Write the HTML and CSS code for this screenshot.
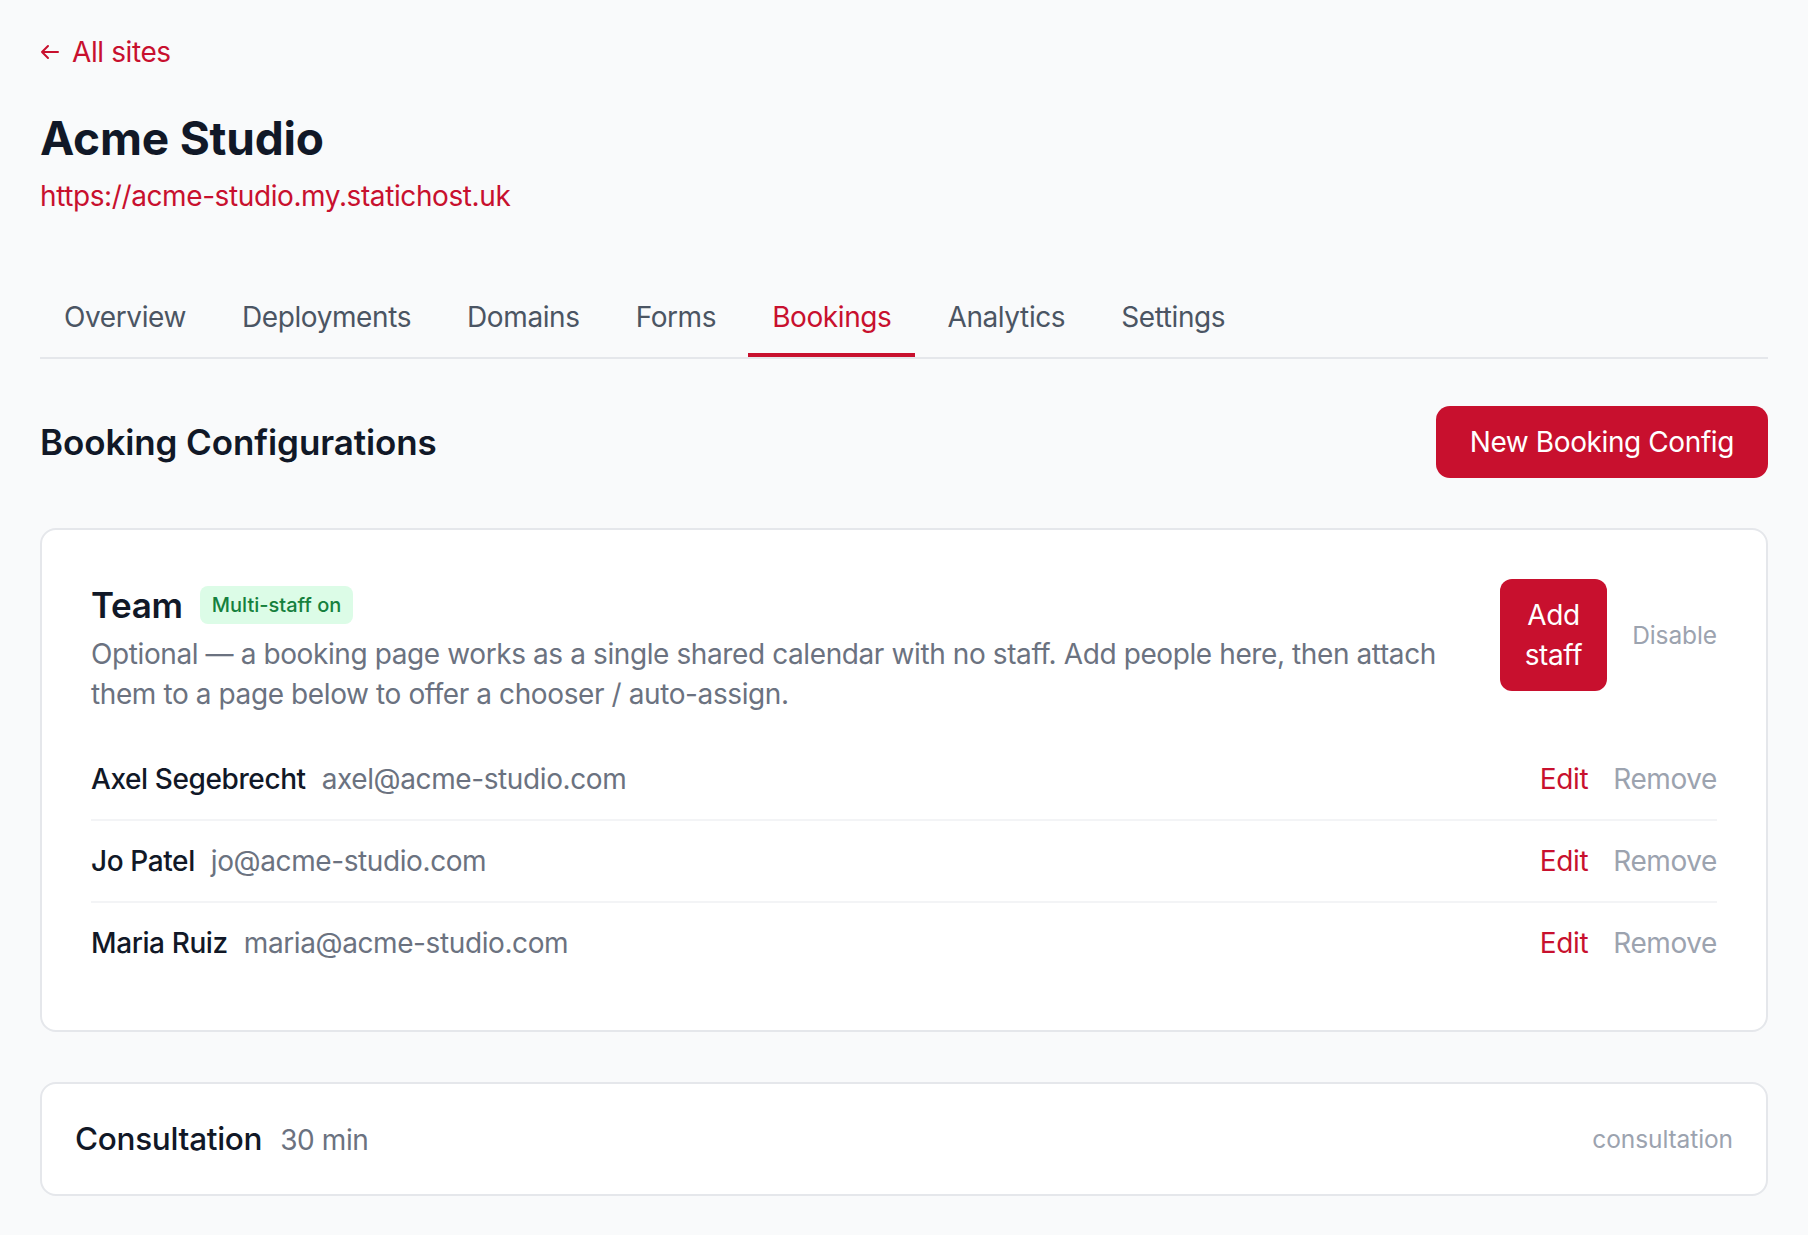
FILE: index.html
```html
<!DOCTYPE html>
<html lang="en">
<head>
    <meta charset="UTF-8">
    <meta name="viewport" content="width=device-width, initial-scale=1.0">
    <title>Bookings - Acme Studio</title>
    <link rel="stylesheet" href="styles.css">
</head>
<body>
<main class="page">
    <a class="back-link" href="#">
        <svg width="20" height="16" viewBox="0 0 20 16" fill="none" stroke="currentColor" stroke-width="2" stroke-linecap="round" stroke-linejoin="round"><path d="M18 8H2M8 2L2 8l6 6"/></svg>
        All sites
    </a>

    <h1 class="site-title">Acme Studio</h1>
    <a class="site-url" href="#">https://acme-studio.my.statichost.uk</a>

    <nav class="tabs">
        <a class="tab" href="#">Overview</a>
        <a class="tab" href="#">Deployments</a>
        <a class="tab" href="#">Domains</a>
        <a class="tab" href="#">Forms</a>
        <a class="tab active" href="#">Bookings</a>
        <a class="tab" href="#">Analytics</a>
        <a class="tab" href="#">Settings</a>
    </nav>

    <div class="section-head">
        <h2>Booking Configurations</h2>
        <button class="btn" type="button">New Booking Config</button>
    </div>

    <!-- Team -->
    <section class="card team-card">
        <div class="team-head">
            <div class="team-info">
                <div class="team-title">
                    <h3>Team</h3>
                    <span class="badge">Multi-staff on</span>
                </div>
                <p class="team-desc">Optional — a booking page works as a single shared calendar with no staff. Add people here, then attach them to a page below to offer a chooser / auto-assign.</p>
            </div>
            <div class="team-actions">
                <button class="btn btn-narrow" type="button">Add staff</button>
                <a class="small-muted" href="#">Disable</a>
            </div>
        </div>

        <ul class="staff-list">
            <li class="staff-row">
                <div class="staff-who">
                    <span class="staff-name">Axel Segebrecht</span>
                    <span class="staff-email">axel@acme-studio.com</span>
                </div>
                <div class="staff-actions">
                    <a class="link-red" href="#">Edit</a>
                    <a class="link-muted" href="#">Remove</a>
                </div>
            </li>
            <li class="staff-row">
                <div class="staff-who">
                    <span class="staff-name">Jo Patel</span>
                    <span class="staff-email">jo@acme-studio.com</span>
                </div>
                <div class="staff-actions">
                    <a class="link-red" href="#">Edit</a>
                    <a class="link-muted" href="#">Remove</a>
                </div>
            </li>
            <li class="staff-row">
                <div class="staff-who">
                    <span class="staff-name">Maria Ruiz</span>
                    <span class="staff-email">maria@acme-studio.com</span>
                </div>
                <div class="staff-actions">
                    <a class="link-red" href="#">Edit</a>
                    <a class="link-muted" href="#">Remove</a>
                </div>
            </li>
        </ul>
    </section>

    <!-- Booking configs -->
    <section class="card config-card">
        <div class="config-name">
            <span class="config-title">Consultation</span>
            <span class="config-length">30 min</span>
        </div>
        <span class="small-muted">consultation</span>
    </section>
</main>
</body>
</html>
```

FILE: styles.css
```css
body {
    font-family: "Inter", "Noto Sans", sans-serif;
    background-color: #f9fafb;
    color: #111827;
    margin: 0;
    padding: 0;
    font-size: 28px;
    line-height: 40px;
    letter-spacing: -0.4px;
}

a {
    text-decoration: none;
}

.page {
    padding: 30px 40px 40px;
}

.back-link {
    display: inline-flex;
    align-items: center;
    gap: 12px;
    color: #c8102e;
}

.site-title {
    margin: 38px 0 0;
    font-size: 46px;
    line-height: 56px;
    font-weight: 700;
    letter-spacing: -0.2px;
}

.site-url {
    display: block;
    margin-top: 10px;
    color: #c8102e;
}

.tabs {
    display: flex;
    gap: 8px;
    margin-top: 65px;
    border-bottom: 2px solid #e5e7eb;
}

.tab {
    padding: 16px 24px;
    color: #4b5563;
    border-bottom: 4px solid transparent;
}

.tab.active {
    color: #c8102e;
    border-bottom-color: #c8102e;
}

.section-head {
    display: flex;
    justify-content: space-between;
    align-items: center;
    margin-top: 47px;
}

.section-head h2 {
    margin: 0;
    font-size: 35px;
    line-height: 48px;
    font-weight: 600;
    letter-spacing: -0.1px;
}

.btn {
    font-family: inherit;
    font-size: 28px;
    line-height: 40px;
    letter-spacing: -0.4px;
    color: #ffffff;
    background-color: #c8102e;
    border: none;
    border-radius: 14px;
    padding: 16px 34px;
    cursor: pointer;
}

.btn-narrow {
    width: min-content;
    padding: 16px 25px;
    border-radius: 12px;
}

.card {
    background-color: #ffffff;
    border: 2px solid #e5e7eb;
    border-radius: 16px;
}

.team-card {
    margin-top: 50px;
    padding: 49px 49px 47px;
}

.team-head {
    display: flex;
    align-items: flex-start;
    gap: 48px;
}

.team-info {
    flex: 1;
}

.team-title {
    display: flex;
    align-items: center;
    gap: 17px;
}

.team-title h3 {
    margin: 0;
    font-size: 35px;
    line-height: 52px;
    font-weight: 600;
    letter-spacing: -0.3px;
}

.badge {
    background-color: #dcfce7;
    color: #15803d;
    font-size: 20px;
    line-height: 28px;
    font-weight: 500;
    letter-spacing: 0;
    padding: 5px 12px;
    border-radius: 8px;
}

.team-desc {
    margin: 3px 0 0;
    color: #6b7280;
}

.team-actions {
    display: flex;
    align-items: center;
    gap: 25px;
}

.small-muted {
    font-size: 24.5px;
    line-height: 35px;
    letter-spacing: -0.1px;
    color: #9ca3af;
}

.staff-list {
    list-style-type: none;
    margin: 25px 0 0;
    padding: 0;
}

.staff-row {
    display: flex;
    justify-content: space-between;
    align-items: center;
    padding: 20px 0;
    border-bottom: 2px solid #f3f4f6;
}

.staff-row:last-child {
    border-bottom: none;
}

.staff-who {
    display: flex;
    gap: 16px;
}

.staff-name {
    font-weight: 500;
}

.staff-email {
    color: #6b7280;
}

.staff-actions {
    display: flex;
    gap: 25px;
}

.link-red {
    color: #c8102e;
}

.link-muted {
    color: #9ca3af;
}

.config-card {
    margin-top: 50px;
    padding: 33px;
    display: flex;
    justify-content: space-between;
    align-items: center;
}

.config-name {
    display: flex;
    align-items: baseline;
    gap: 18px;
}

.config-title {
    font-size: 31.5px;
    line-height: 44px;
    font-weight: 500;
    letter-spacing: -0.3px;
}

.config-length {
    color: #6b7280;
}
```
